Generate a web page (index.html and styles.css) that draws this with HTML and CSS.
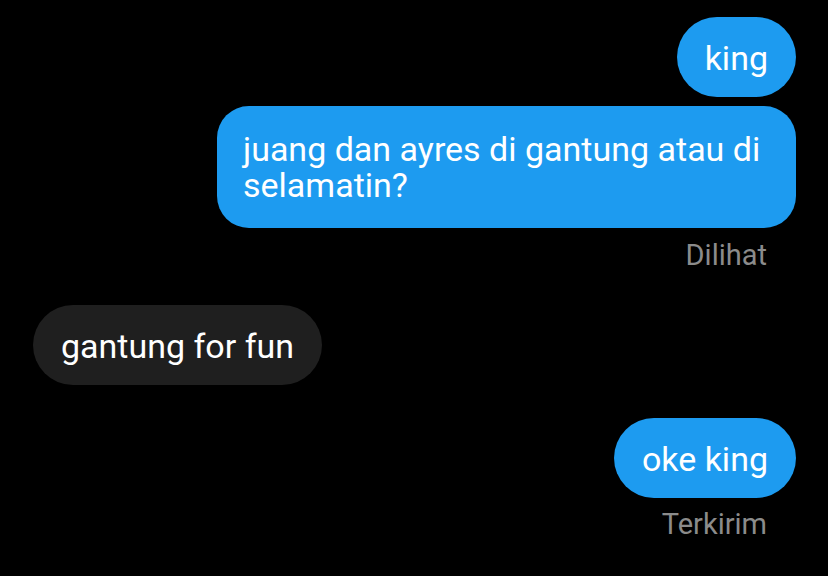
FILE: index.html
```html
<!DOCTYPE html>
<html>
<head>
<meta charset="utf-8">
<link rel="stylesheet" href="styles.css">
</head>
<body>
<div class="chat">
  <div class="msg sent first"><div class="bubble blue">king</div></div>
  <div class="msg sent gap-small"><div class="bubble blue wide">juang dan ayres di gantung atau di selamatin?</div></div>
  <div class="status">Dilihat</div>
  <div class="msg recv"><div class="bubble dark">gantung for fun</div></div>
  <div class="msg sent last"><div class="bubble blue">oke king</div></div>
  <div class="status status-sent">Terkirim</div>
</div>
</body>
</html>
```
FILE: styles.css
```css
html, body {
  margin: 0;
  padding: 0;
  background: #000;
  height: 100%;
}
body {
  font-family: "Roboto", "Liberation Sans", sans-serif;
  overflow: hidden;
}
.chat {
  display: flex;
  flex-direction: column;
  padding: 17px 32px 0 33px;
}
.msg {
  display: flex;
}
.msg.sent {
  justify-content: flex-end;
}
.msg.recv {
  justify-content: flex-start;
  margin-top: 36px;
}
.msg.gap-small {
  margin-top: 9px;
}
.msg.last {
  margin-top: 33px;
}
.bubble {
  box-sizing: border-box;
  font-size: 34px;
  line-height: 36px;
  color: #fff;
  padding: 23px 28px 21px;
  border-radius: 40px;
}
.bubble.wide {
  max-width: 579px;
  padding: 25px 28px 25px 26px;
  border-radius: 32px;
}
.blue {
  background: #1d9bf0;
}
.dark {
  background: #1f1f1f;
}
.status {
  align-self: flex-end;
  margin-right: 29px;
  margin-top: 13px;
  font-size: 29px;
  line-height: 28px;
  color: #8b8b8b;
}
.status-sent {
  margin-top: 12px;
}
```
